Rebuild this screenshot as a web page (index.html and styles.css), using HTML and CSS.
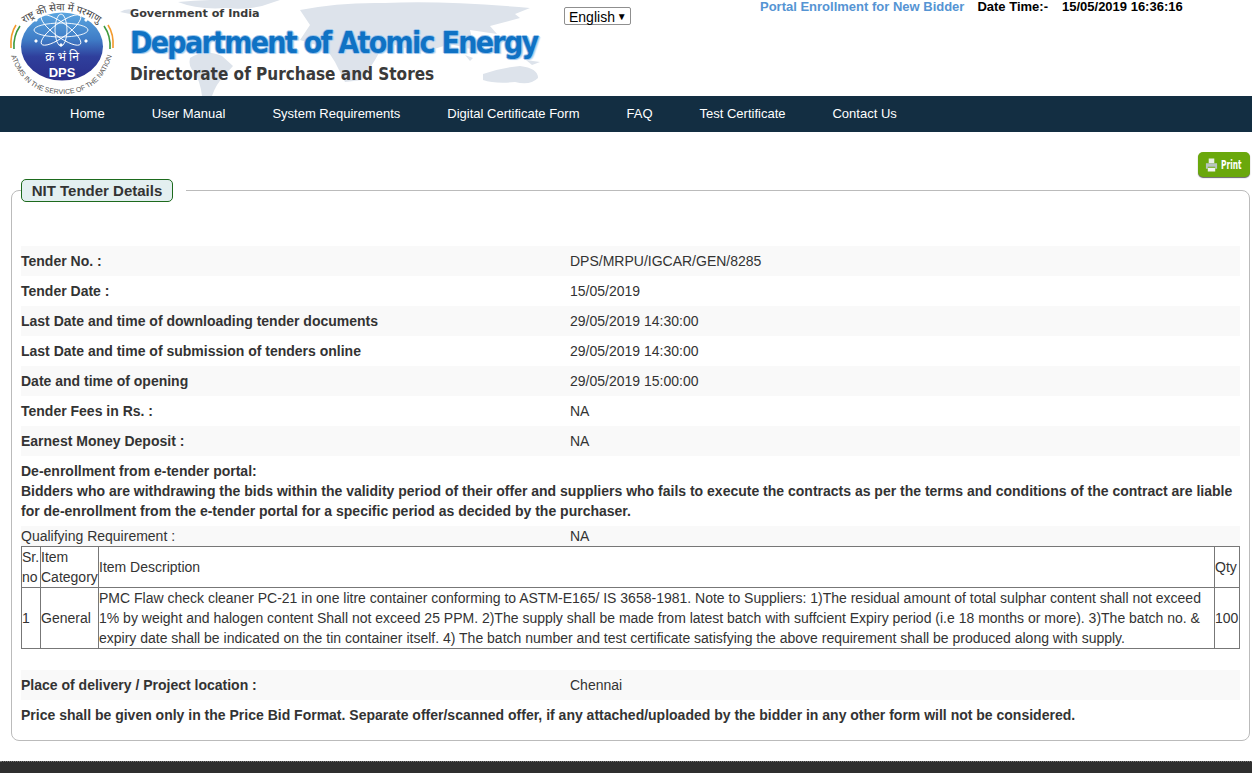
FILE: index.html
```html
<!DOCTYPE html>
<html lang="en">
<head>
    <meta charset="UTF-8">
    <title>NIT Tender Details</title>
    <link rel="stylesheet" href="styles.css">
</head>
<body>
    <header class="top">
        <svg class="logo" width="125" height="96" viewBox="0 0 125 96">
            <defs>
                <linearGradient id="disc" x1="0" y1="0" x2="0" y2="1">
                    <stop offset="0" stop-color="#5aa6e0"/>
                    <stop offset="0.4" stop-color="#3f7cc6"/>
                    <stop offset="0.65" stop-color="#2f3f9c"/>
                    <stop offset="1" stop-color="#2b2f8c"/>
                </linearGradient>
                <path id="arcTop" d="M18 28 Q62 -7 105 28"/>
                <path id="arcBottom" d="M10 52 Q22 94 62 94 Q102 94 113 52"/>
            </defs>
            <path d="M11 48 Q10 34 16 25" fill="none" stroke="#f39a2d" stroke-width="1.6"/>
            <path d="M14 49 Q13 36 20 26" fill="none" stroke="#3e9a3e" stroke-width="1.6"/>
            <path d="M113 48 Q114 34 108 25" fill="none" stroke="#f39a2d" stroke-width="1.6"/>
            <path d="M110 49 Q111 36 104 26" fill="none" stroke="#3e9a3e" stroke-width="1.6"/>
            <ellipse cx="62" cy="46.5" rx="41" ry="34" fill="url(#disc)"/>
            <g transform="translate(61 30)" fill="none" stroke="#fff" stroke-width="0.9">
                <ellipse rx="27" ry="7"/>
                <ellipse rx="24" ry="7" transform="rotate(36)"/>
                <ellipse rx="16" ry="6" transform="rotate(90)"/>
                <ellipse rx="24" ry="7" transform="rotate(144)"/>
                <circle cx="-25" cy="11" r="1.2" fill="#fff"/>
                <circle cx="25" cy="11" r="1.2" fill="#fff"/>
                <circle cx="-25" cy="-10" r="1.2" fill="#fff"/>
                <circle cx="25" cy="-10" r="1.2" fill="#fff"/>
                <circle cx="0" cy="15" r="1.2" fill="#fff"/>
            </g>
            <text class="logo-hindi" x="62" y="61" text-anchor="middle">क्र भं नि</text>
            <text class="logo-dps" x="62" y="77" text-anchor="middle">DPS</text>
            <text class="logo-arc"><textPath href="#arcTop" startOffset="50%" text-anchor="middle">राष्ट्र की सेवा में परमाणु</textPath></text>
            <text class="logo-arc-small"><textPath href="#arcBottom" startOffset="50%" text-anchor="middle">ATOMS IN THE SERVICE OF THE NATION</textPath></text>
        </svg>
        <div class="brand">
            <svg class="map" width="430" height="96" viewBox="120 0 430 96">
                <g fill="#dde3eb">
                    <path d="M120 12 Q126 8 134 10 L130 14 Z"/>
                    <path d="M178 2 Q225 -2 280 0 L262 6 Q244 10 226 8 Q198 10 178 2Z"/>
                    <path d="M190 58 Q204 48 222 56 L233 66 L224 76 Q216 84 212 96 L202 96 Q200 80 194 72 Q188 66 190 58Z"/>
                    <path d="M300 10 Q340 2 385 3 Q440 0 530 8 L515 14 L520 18 L490 26 L497 34 L470 30 L475 50 L450 44 L425 52 L405 48 L385 42 L375 60 L362 80 L345 82 L335 62 L326 48 L300 40 L310 25Z"/>
                    <path d="M465 55 L473 58 L470 61 Z"/>
                    <path d="M526 60 L540 62 L532 65 Z"/>
                    <path d="M483 74 Q500 68 520 66 Q538 68 538 78 Q530 86 515 82 Q495 84 483 80Z"/>
                </g>
            </svg>
            <p class="gov">Government of India</p>
            <p class="dept">Department of Atomic Energy</p>
            <p class="dir">Directorate of Purchase and Stores</p>
        </div>
        <div class="lang">English <span class="lang-arrow">▼</span></div>
        <div class="top-info">
            <a class="enroll" href="#">Portal Enrollment for New Bidder</a>
            <span class="date-label">Date Time:-</span>
            <span class="date-value">15/05/2019 16:36:16</span>
        </div>
    </header>

    <nav class="menu">
        <a href="#">Home</a>
        <a href="#">User Manual</a>
        <a href="#">System Requirements</a>
        <a href="#">Digital Certificate Form</a>
        <a href="#">FAQ</a>
        <a href="#">Test Certificate</a>
        <a href="#">Contact Us</a>
    </nav>

    <div class="print-row">
        <a class="print-btn" href="#">
            <svg width="13" height="16" viewBox="0 0 14 16">
                <path d="M4 1h6v5H4z" fill="#e8efe4"/>
                <path d="M1 6h12v6h-2v-2H3v2H1z" fill="#b9c4c2"/>
                <path d="M3 11h8v4H3z" fill="#f2f5f0"/>
            </svg>
            <span class="print-label">Print</span>
        </a>
    </div>

    <fieldset class="panel">
        <legend><span class="legend-box">NIT Tender Details</span></legend>

        <div class="row"><b>Tender No. :</b><span>DPS/MRPU/IGCAR/GEN/8285</span></div>
        <div class="row"><b>Tender Date :</b><span>15/05/2019</span></div>
        <div class="row"><b>Last Date and time of downloading tender documents</b><span>29/05/2019 14:30:00</span></div>
        <div class="row"><b>Last Date and time of submission of tenders online</b><span>29/05/2019 14:30:00</span></div>
        <div class="row"><b>Date and time of opening</b><span>29/05/2019 15:00:00</span></div>
        <div class="row"><b>Tender Fees in Rs. :</b><span>NA</span></div>
        <div class="row"><b>Earnest Money Deposit :</b><span>NA</span></div>

        <p class="note">De-enrollment from e-tender portal:<br>Bidders who are withdrawing the bids within the validity period of their offer and suppliers who fails to execute the contracts as per the terms and conditions of the contract are liable for de-enrollment from the e-tender portal for a specific period as decided by the purchaser.</p>

        <div class="row row-small"><span>Qualifying Requirement :</span><span>NA</span></div>

        <table class="items">
            <tr>
                <td class="c-sr">Sr. no</td>
                <td class="c-cat">Item Category</td>
                <td>Item Description</td>
                <td class="c-qty">Qty</td>
            </tr>
            <tr>
                <td>1</td>
                <td>General</td>
                <td>PMC Flaw check cleaner PC-21 in one litre container conforming to ASTM-E165/ IS 3658-1981. Note to Suppliers: 1)The residual amount of total sulphar content shall not exceed 1% by weight and halogen content Shall not exceed 25 PPM. 2)The supply shall be made from latest batch with suffcient Expiry period (i.e 18 months or more). 3)The batch no. &amp; expiry date shall be indicated on the tin container itself. 4) The batch number and test certificate satisfying the above requirement shall be produced along with supply.</td>
                <td>100</td>
            </tr>
        </table>

        <div class="row row-place"><b>Place of delivery / Project location :</b><span>Chennai</span></div>
        <p class="price-note">Price shall be given only in the Price Bid Format. Separate offer/scanned offer, if any attached/uploaded by the bidder in any other form will not be considered.</p>
    </fieldset>

    <footer class="foot"></footer>
</body>
</html>
```

FILE: styles.css
```css
* {
    box-sizing: border-box;
}

html, body {
    height: 773px;
    overflow: hidden;
}

body {
    margin: 0;
    background: #fff;
    color: #333;
    font-family: "Liberation Sans", Arial, sans-serif;
    font-size: 14px;
}

.top {
    display: flex;
    height: 96px;
}

.logo {
    flex: none;
}

.logo-hindi {
    font-family: "Noto Sans", "DejaVu Sans", sans-serif;
    font-size: 12px;
    fill: #fff;
}

.logo-dps {
    font-family: "Liberation Sans", sans-serif;
    font-weight: bold;
    font-size: 13px;
    fill: #fff;
}

.logo-arc {
    font-family: "Noto Sans", "DejaVu Sans", sans-serif;
    font-size: 10px;
    fill: #444;
}

.logo-arc-small {
    font-family: "Liberation Sans", sans-serif;
    font-size: 7px;
    fill: #555;
}

.brand {
    position: relative;
    flex: none;
    width: 434px;
    margin-left: 5px;
    padding-top: 7px;
}

.map {
    position: absolute;
    left: -10px;
    top: 0;
}

.brand p {
    position: relative;
    margin: 0;
    font-family: "DejaVu Sans Condensed", "DejaVu Sans", sans-serif;
    font-weight: bold;
    white-space: nowrap;
}

.brand .gov {
    font-family: "DejaVu Sans", sans-serif;
    font-size: 11.2px;
    line-height: 14px;
    color: #3a3a3a;
}

.brand .dept {
    margin-top: 3px;
    font-size: 30px;
    line-height: 38px;
    letter-spacing: -1.7px;
    color: #0f72c4;
    text-shadow: 1px 0 0 #9cc6ec, -1px 0 0 #9cc6ec, 0 1px 0 #9cc6ec, 0 -1px 0 #9cc6ec, 2px 1px 1px #c5dcf2;
}

.brand .dir {
    margin-top: 1px;
    font-size: 17px;
    line-height: 22px;
    color: #3a3a3a;
}

.lang {
    flex: none;
    align-self: flex-start;
    width: 67px;
    height: 18px;
    margin-top: 7px;
    padding-left: 4px;
    border: 1px solid #8f8f8f;
    border-radius: 2px;
    color: #000;
    line-height: 18px;
    white-space: nowrap;
}

.lang-arrow {
    margin-left: -2px;
    font-size: 10px;
    vertical-align: 2px;
}

.top-info {
    display: flex;
    align-self: flex-start;
    margin-left: 129px;
    font-size: 13px;
    line-height: 14px;
    color: #000;
    font-weight: bold;
    white-space: nowrap;
}

.enroll {
    color: #5594d3;
    text-decoration: none;
}

.date-label {
    margin-left: 13px;
}

.date-value {
    margin-left: 14px;
}

.menu {
    display: flex;
    gap: 47px;
    height: 36px;
    padding-left: 70px;
    background: #132e42;
    font-size: 13px;
    line-height: 35px;
}

.menu a {
    color: #fff;
    text-decoration: none;
}

.print-row {
    display: flex;
    justify-content: flex-end;
    height: 47px;
    padding: 20px 2px 0 0;
}

.print-btn {
    display: flex;
    align-items: center;
    gap: 3px;
    width: 52px;
    height: 25px;
    padding-left: 7px;
    border-radius: 5px;
    background: #6aa80c;
    box-shadow: 0 1px 1px #666;
    color: #fff;
    text-decoration: none;
}

.print-label {
    display: block;
    width: 21px;
    font-family: "DejaVu Sans Condensed", "DejaVu Sans", sans-serif;
    font-size: 11.5px;
    font-weight: bold;
    transform: scaleX(0.72);
    transform-origin: left center;
}

.panel {
    display: block;
    min-width: 0;
    height: 562px;
    margin: 0 2px 0 11px;
    padding: 44px 9px 0;
    border: 1px solid #bbb;
    border-radius: 8px;
}

.panel legend {
    padding: 0 13px 0 0;
}

.legend-box {
    display: block;
    width: 152px;
    height: 23px;
    border: 1px solid #1d6a1d;
    border-radius: 5px;
    background: #e3eff0;
    color: #333;
    font-size: 15px;
    font-weight: bold;
    line-height: 21px;
    text-align: center;
}

.row {
    display: flex;
    height: 30px;
    line-height: 30px;
}

.row > :first-child {
    flex: none;
    width: 549px;
}

.row:nth-of-type(odd) {
    background: #f9f9f9;
}

.note {
    margin: 0;
    padding: 5px 0;
    font-weight: bold;
    line-height: 20px;
}

.row.row-small {
    height: 20px;
    line-height: 20px;
    background: #f9f9f9;
}

.items {
    width: 100%;
    table-layout: fixed;
    border-collapse: collapse;
    border: 1px solid #000;
}

.items td {
    padding: 0;
    border: 1px solid #777;
    line-height: 20px;
}

.items td.c-sr {
    width: 19px;
}

.items td.c-cat {
    width: 58px;
}

.items td.c-qty {
    width: 25px;
}

.row.row-place {
    margin-top: 21px;
    background: #f9f9f9;
}

.price-note {
    margin: 5px 0 0;
    font-weight: bold;
    line-height: 20px;
}

.foot {
    height: 12px;
    margin-top: 20px;
    background: #2f2f2f;
    border-top: 1px dotted #777;
}
```
